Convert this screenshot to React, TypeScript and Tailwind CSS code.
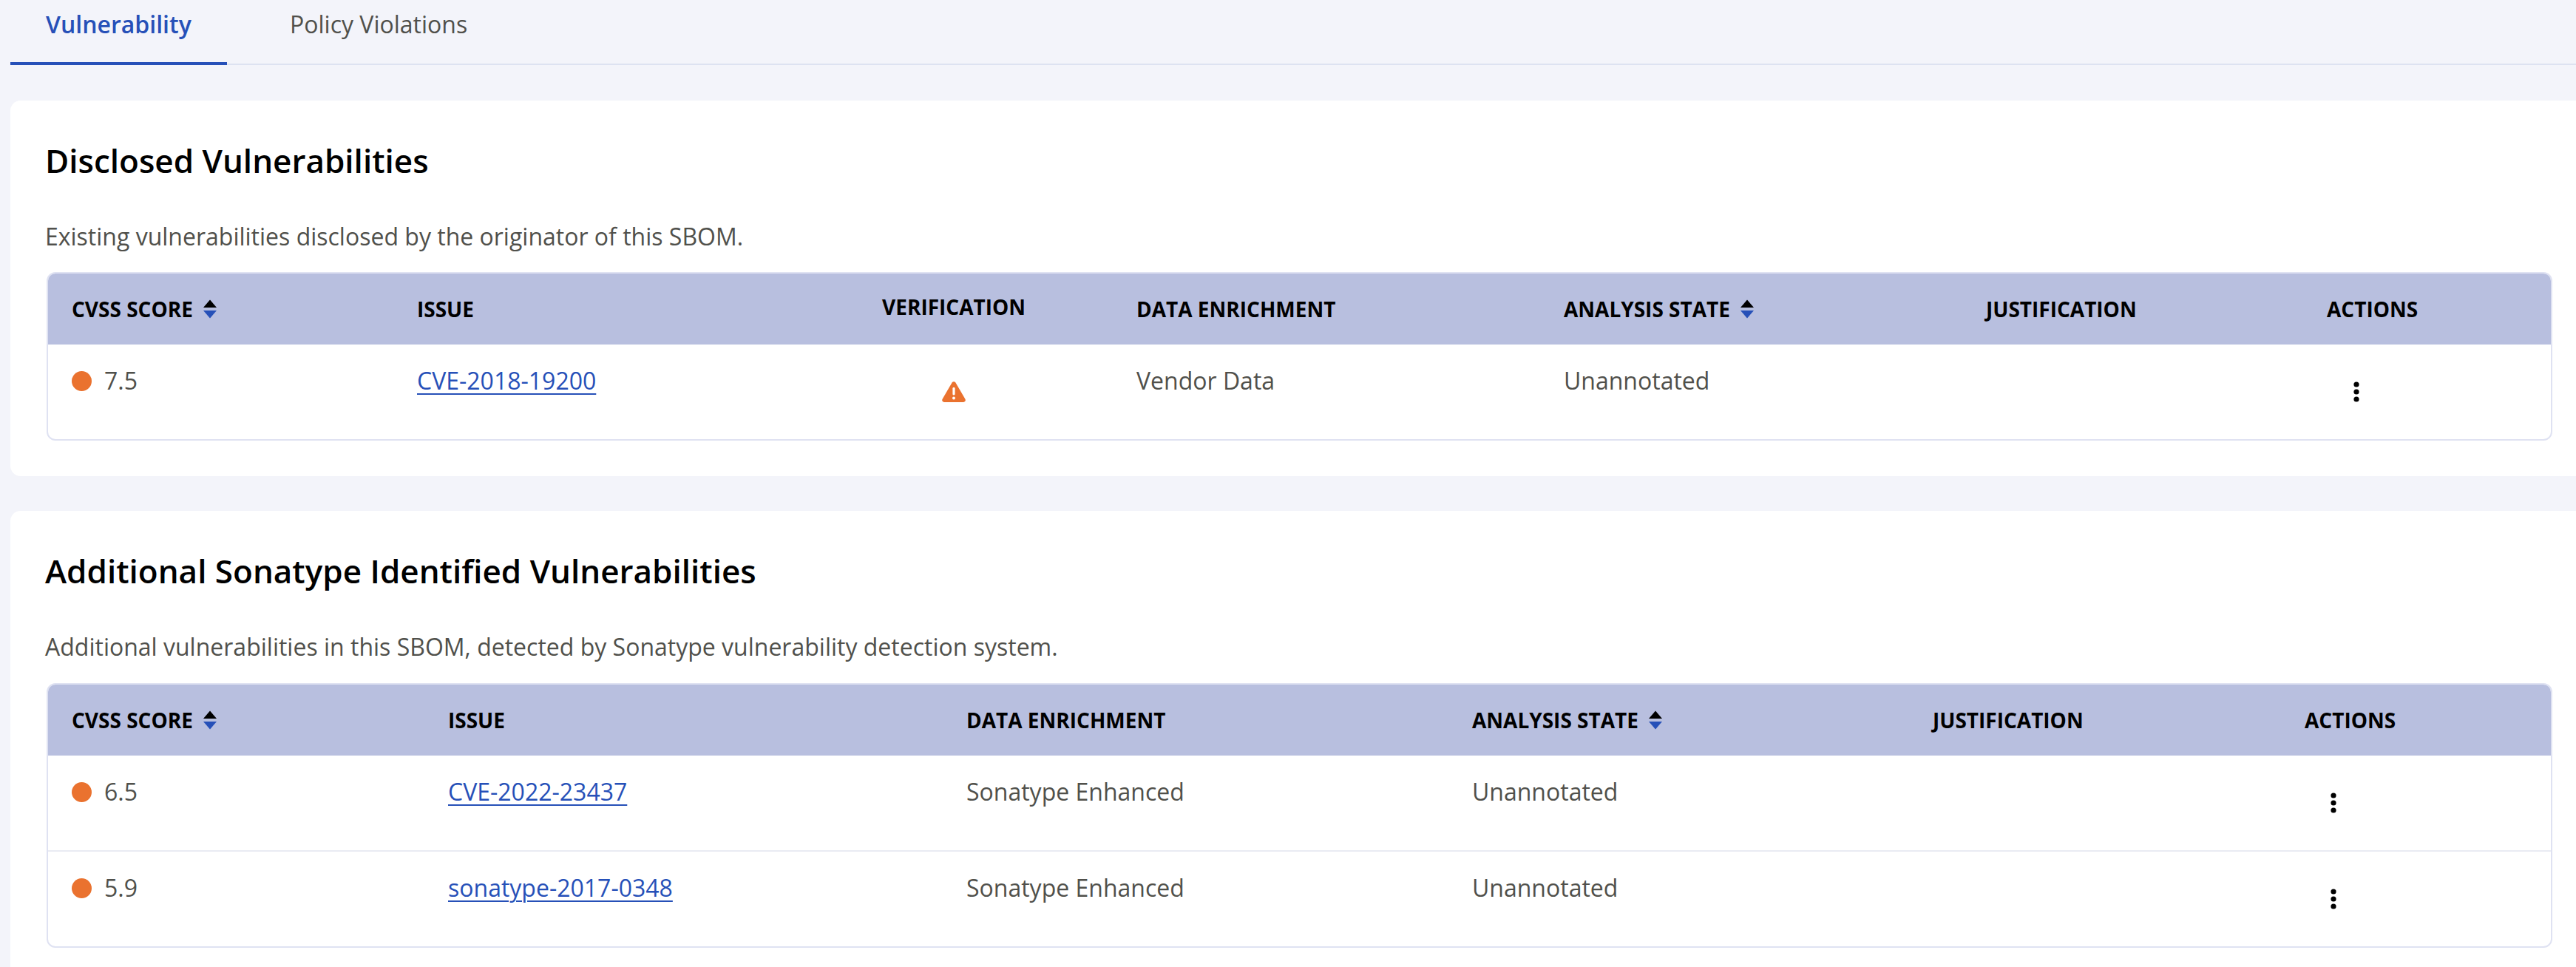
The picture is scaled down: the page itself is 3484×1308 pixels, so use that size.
const headCell = "h-[96px] align-middle text-[28px] font-bold text-black uppercase whitespace-nowrap";
const bodyCell = "pt-[31px] align-top text-[32px] leading-[36px] text-[#50504b] whitespace-nowrap";

function SortIcon() {
  return (
    <svg className="ml-[14px] inline-block align-[-2px]" width="18" height="26" viewBox="0 0 18 26">
      <path d="M9 0.5 L18 11 L0 11 Z" fill="#000" />
      <path d="M0 15 L18 15 L9 25.5 Z" fill="#2650b8" />
    </svg>
  );
}

function Kebab() {
  return (
    <svg className="block" width="10" height="28" viewBox="0 0 10 28">
      <circle cx="5" cy="4" r="3.6" fill="#000" />
      <circle cx="5" cy="14" r="3.6" fill="#000" />
      <circle cx="5" cy="24" r="3.6" fill="#000" />
    </svg>
  );
}

function Warning() {
  return (
    <svg className="mx-auto block" width="32" height="28" viewBox="0 0 32 28">
      <path d="M13.6 1.6 a2.8 2.8 0 0 1 4.8 0 L31.4 23.8 a2.8 2.8 0 0 1 -2.4 4.2 H3 a2.8 2.8 0 0 1 -2.4 -4.2 Z" fill="#ea722f" />
      <rect x="14.4" y="8" width="3.2" height="10.5" rx="1.4" fill="#fff" />
      <circle cx="16" cy="22.4" r="2" fill="#fff" />
    </svg>
  );
}

function Score({ value }: { value: string }) {
  return (
    <span className="flex items-center gap-[17px]">
      <span className="size-[27px] rounded-full bg-[#ea722f]" />
      {value}
    </span>
  );
}

function IssueLink({ id }: { id: string }) {
  return <a className="text-[#2650b8] underline decoration-2 underline-offset-[5px]" href="#">{id}</a>;
}

export default function App() {
  return (
    <div className="h-[1308px] overflow-hidden bg-[#f3f4fa] font-['Open_Sans',sans-serif]">
      <div className="ml-[14px] flex h-[88px] border-b-2 border-[#dde2f1]">
        <div className="-mb-[2px] h-[88px] w-[293px] border-b-4 border-[#2650b8] pl-[48px] pt-[12px] text-[32px] leading-[42px] font-semibold text-[#2650b8]">Vulnerability</div>
        <div className="ml-[85px] pt-[12px] text-[32px] leading-[42px] text-[#50504b]">Policy Violations</div>
      </div>

      <section className="ml-[14px] mt-[48px] h-[508px] rounded-l-[14px] bg-white pl-[49px] pr-[32px] pt-[53px]">
        <h2 className="-ml-[2px] text-[44px] leading-[56px] font-semibold text-black">Disclosed Vulnerabilities</h2>
        <p className="-ml-[2px] mt-[55px] text-[32px] leading-[40px] text-[#50504b]">Existing vulnerabilities disclosed by the originator of this SBOM.</p>
        <div className="mt-[28px] overflow-hidden rounded-[12px] border-2 border-[#dfe2f2]">
          <table className="w-full table-fixed border-collapse">
            <colgroup>
              <col className="w-[499px]" />
              <col className="w-[479px]" />
              <col className="w-[494px]" />
              <col className="w-[578px]" />
              <col className="w-[571px]" />
              <col className="w-[461px]" />
              <col />
            </colgroup>
            <thead className="bg-[#b8bfdf]">
              <tr>
                <th className={`${headCell} pl-[32px] text-left`}>CVSS Score<SortIcon /></th>
                <th className={`${headCell} text-left`}>Issue</th>
                <th className={`${headCell} pb-[6px] text-center`}>Verification</th>
                <th className={`${headCell} text-left`}>Data Enrichment</th>
                <th className={`${headCell} text-left`}>Analysis State<SortIcon /></th>
                <th className={`${headCell} text-left`}>Justification</th>
                <th className={`${headCell} text-left`}>Actions</th>
              </tr>
            </thead>
            <tbody>
              <tr className="h-[128px]">
                <td className={`${bodyCell} pl-[32px]`}><Score value="7.5" /></td>
                <td className={bodyCell}><IssueLink id="CVE-2018-19200" /></td>
                <td className="pt-[50px] align-top"><Warning /></td>
                <td className={bodyCell}>Vendor Data</td>
                <td className={bodyCell}>Unannotated</td>
                <td />
                <td className="pt-[50px] align-top"><div className="ml-[35px]"><Kebab /></div></td>
              </tr>
            </tbody>
          </table>
        </div>
      </section>

      <section className="ml-[14px] mt-[47px] h-[640px] rounded-l-[14px] bg-white pl-[49px] pr-[32px] pt-[53px]">
        <h2 className="-ml-[2px] text-[44px] leading-[56px] font-semibold text-black">Additional Sonatype Identified Vulnerabilities</h2>
        <p className="-ml-[2px] mt-[55px] text-[32px] leading-[40px] text-[#50504b]">Additional vulnerabilities in this SBOM, detected by Sonatype vulnerability detection system.</p>
        <div className="mt-[29px] overflow-hidden rounded-[12px] border-2 border-[#dfe2f2]">
          <table className="w-full table-fixed border-collapse">
            <colgroup>
              <col className="w-[541px]" />
              <col className="w-[701px]" />
              <col className="w-[684px]" />
              <col className="w-[623px]" />
              <col className="w-[503px]" />
              <col />
            </colgroup>
            <thead className="bg-[#b8bfdf]">
              <tr>
                <th className={`${headCell} pl-[32px] text-left`}>CVSS Score<SortIcon /></th>
                <th className={`${headCell} text-left`}>Issue</th>
                <th className={`${headCell} text-left`}>Data Enrichment</th>
                <th className={`${headCell} text-left`}>Analysis State<SortIcon /></th>
                <th className={`${headCell} text-left`}>Justification</th>
                <th className={`${headCell} text-left`}>Actions</th>
              </tr>
            </thead>
            <tbody>
              <tr className="h-[129px] border-b-2 border-[#e9ebf3]">
                <td className={`${bodyCell} pl-[32px]`}><Score value="6.5" /></td>
                <td className={bodyCell}><IssueLink id="CVE-2022-23437" /></td>
                <td className={bodyCell}>Sonatype Enhanced</td>
                <td className={bodyCell}>Unannotated</td>
                <td />
                <td className="pt-[50px] align-top"><div className="ml-[34px]"><Kebab /></div></td>
              </tr>
              <tr className="h-[129px]">
                <td className={`${bodyCell} pl-[32px]`}><Score value="5.9" /></td>
                <td className={bodyCell}><IssueLink id="sonatype-2017-0348" /></td>
                <td className={bodyCell}>Sonatype Enhanced</td>
                <td className={bodyCell}>Unannotated</td>
                <td />
                <td className="pt-[50px] align-top"><div className="ml-[34px]"><Kebab /></div></td>
              </tr>
            </tbody>
          </table>
        </div>
      </section>
    </div>
  );
}
